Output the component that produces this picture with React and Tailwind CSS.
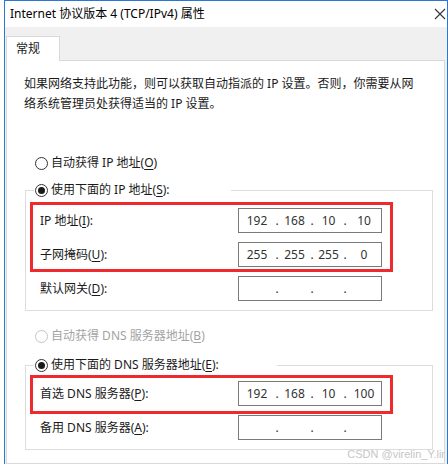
import React from 'react'

function Radio({ checked, disabled, children }) {
    return (
        <span className="flex items-center h-[20px]">
            <span className={`w-[13px] h-[13px] rounded-full border bg-white flex items-center justify-center ${disabled ? 'border-[#c4c4c4]' : 'border-[#333333]'}`}>
                {checked && <span className="w-[7px] h-[7px] rounded-full bg-[#1a1a1a]" />}
            </span>
            <span className={`ml-[3px] ${disabled ? 'text-[#a3a3a3]' : 'text-[#1a1a1a]'}`}>{children}</span>
        </span>
    )
}

function IpBox({ parts = ['', '', '', ''] }) {
    return (
        <div className="w-[144px] h-[25px] border border-[#7a7a7a] bg-white grid grid-cols-[36px_4px_31px_4px_29px_4px_34px] items-center text-[12px] text-[#333333] leading-none">
            <span className="text-center">{parts[0]}</span>
            <span className="text-center">.</span>
            <span className="text-center">{parts[1]}</span>
            <span className="text-center">.</span>
            <span className="text-center">{parts[2]}</span>
            <span className="text-center">.</span>
            <span className="text-center">{parts[3]}</span>
        </div>
    )
}

function Key({ children }) {
    return <span className="underline underline-offset-2">{children}</span>
}

export default function App() {
    return (
        <div className="relative w-[448px] h-[464px] overflow-hidden bg-white text-[12px] text-[#1a1a1a] font-['Noto_Sans','Noto_Sans_CJK_SC',sans-serif]">
            <div className="ml-[4px] w-[444px] h-[464px] border-x border-t border-[#2b78d4] bg-[#f0f0f0] flex flex-col">
                {/* title bar */}
                <div className="h-[26px] shrink-0 bg-white flex items-center justify-between pl-[5px] pr-[1px]">
                    <span className="text-black">Internet 协议版本 4 (TCP/IPv4) 属性</span>
                    <svg width="12" height="12" viewBox="0 0 12 12" className="mt-[-1px]">
                        <path d="M1 1L11 11M11 1L1 11" stroke="#333" strokeWidth="1.1" fill="none" />
                    </svg>
                </div>

                {/* tabs */}
                <div className="pt-[9px] shrink-0">
                    <div className="relative z-10 ml-[1px] mb-[-1px] w-[54px] h-[25px] bg-white border-x border-t border-[#d9d9d9] flex items-center pl-[9px]">
                        常规
                    </div>
                </div>

                {/* panel */}
                <div className="ml-[1px] mr-[2px] flex-1 bg-white border border-[#d9d9d9] pl-[17px] pt-[13px]">
                    <p className="leading-[20px]">
                        如果网络支持此功能，则可以获取自动指派的 IP 设置。否则，你需要从网<br />
                        络系统管理员处获得适当的 IP 设置。
                    </p>

                    <div className="mt-[39px] ml-[11px]">
                        <Radio>自动获得 IP 地址(<Key>O</Key>)</Radio>
                    </div>

                    <fieldset className="mt-[7px] ml-[1px] w-[408px] border border-[#dcdcdc] pb-[9px]">
                        <legend className="ml-[8px] pl-[1px] w-[197px]">
                            <Radio checked>使用下面的 IP 地址(<Key>S</Key>):</Radio>
                        </legend>
                        <div className="mt-[2px] ml-[4px] w-[363px] border-[3px] border-[#ee2a2e] pt-[3px] pb-[2px] flex flex-col gap-[9px]">
                            <div className="h-[25px] flex items-center justify-between pl-[7px] pr-[8px]">
                                <span>IP 地址(<Key>I</Key>):</span>
                                <IpBox parts={['192', '168', '10', '10']} />
                            </div>
                            <div className="h-[25px] flex items-center justify-between pl-[7px] pr-[8px]">
                                <span>子网掩码(<Key>U</Key>):</span>
                                <IpBox parts={['255', '255', '255', '0']} />
                            </div>
                        </div>
                        <div className="mt-[4px] h-[25px] flex items-center justify-between pl-[14px] pr-[50px]">
                            <span>默认网关(<Key>D</Key>):</span>
                            <IpBox />
                        </div>
                    </fieldset>

                    <div className="mt-[15px] ml-[11px]">
                        <Radio disabled>自动获得 DNS 服务器地址(<Key>B</Key>)</Radio>
                    </div>

                    <fieldset className="mt-[9px] ml-[1px] w-[408px] border border-[#dcdcdc] pb-[9px]">
                        <legend className="ml-[8px] pl-[1px] w-[243px]">
                            <Radio checked>使用下面的 DNS 服务器地址(<Key>E</Key>):</Radio>
                        </legend>
                        <div className="ml-[4px] w-[363px] border-[3px] border-[#ee2a2e] pt-[3px] pb-[5px]">
                            <div className="h-[25px] flex items-center justify-between pl-[7px] pr-[8px]">
                                <span>首选 DNS 服务器(<Key>P</Key>):</span>
                                <IpBox parts={['192', '168', '10', '100']} />
                            </div>
                        </div>
                        <div className="mt-[1px] h-[25px] flex items-center justify-between pl-[14px] pr-[50px]">
                            <span>备用 DNS 服务器(<Key>A</Key>):</span>
                            <IpBox />
                        </div>
                    </fieldset>
                </div>
            </div>

            <span className="absolute right-[3px] bottom-[4px] text-[11px] leading-none text-[#c6c6c6] font-['Liberation_Sans',sans-serif]">
                CSDN @virelin_Y.lir
            </span>
        </div>
    )
}
